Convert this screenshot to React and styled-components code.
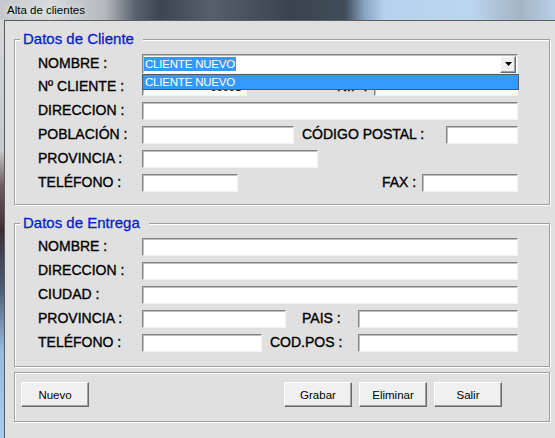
import styled, { createGlobalStyle } from 'styled-components';

const GlobalStyle = createGlobalStyle`
  html, body {
    margin: 0;
    padding: 0;
    background: #e0e0e0;
  }
  body {
    font-family: "Liberation Sans", Arial, sans-serif;
  }
`;

const Window = styled.div`
  width: 555px;
  height: 438px;
  display: flex;
  flex-direction: column;
  overflow: hidden;
  background: linear-gradient(
    180deg,
    #d6d8da 0px,
    #c6cacd 150px,
    #6e5e62 185px,
    #3c2e34 230px,
    #4e5e78 290px,
    #96bae0 350px,
    #a8ccee 438px
  );
`;

const TitleBar = styled.div`
  height: 20px;
  flex: none;
  display: flex;
  align-items: center;
  padding-left: 7px;
  background: linear-gradient(
    90deg,
    #c4c8cc 0px,
    #d8dadc 50px,
    #b4b8bc 105px,
    #5a646e 135px,
    #3c4650 160px,
    #56606a 210px,
    #3a444e 290px,
    #404c58 345px,
    #8aa6c4 365px,
    #b6d2ee 385px,
    #bcd6f0 470px,
    #a4b4c4 520px,
    #b8d0e8 555px
  );
`;

const Title = styled.span`
  font-size: 11.5px;
  color: #000;
  text-shadow: 0 0 6px rgba(255, 255, 255, 0.9);
`;

const Body = styled.div`
  flex: 1;
  margin-left: 4px;
  border-left: 1px solid #5c5c5c;
  border-top: 1px solid #5c5c5c;
  background: #e0e0e0;
  display: flex;
  flex-direction: column;
  padding: 0 5px 0 9px;
`;

const Group = styled.fieldset`
  margin: ${p => p.$top}px 0 0;
  padding: 0;
  min-width: 0;
  border: 1px solid #a0a0a0;
  box-shadow: inset 1px 1px 0 #fff, 1px 1px 0 #fff;
`;

const Legend = styled.legend`
  margin-left: 5px;
  padding: 0 9px 0 3px;
  font-size: 15px;
  line-height: 16px;
  color: #0a1ec8;
  -webkit-text-stroke: 0.3px #0a1ec8;
  background: #e0e0e0;
`;

const Fields = styled.div`
  display: flex;
  flex-direction: column;
  padding: 7px 31px ${p => p.$bottom}px 23px;
`;

const Row = styled.div`
  position: relative;
  display: flex;
  align-items: flex-start;
  height: 24px;
`;

const Label = styled.span`
  flex: none;
  width: 104px;
  font-size: 14px;
  line-height: ${p => p.$lh || 17}px;
  color: #000;
  -webkit-text-stroke: 0.35px #000;
  white-space: nowrap;
`;

const SideLabel = styled.span`
  flex: none;
  margin-left: ${p => p.$ml}px;
  font-size: 14px;
  line-height: 17px;
  color: #000;
  -webkit-text-stroke: 0.35px #000;
  white-space: nowrap;
`;

const Field = styled.input`
  box-sizing: border-box;
  flex: none;
  width: ${p => p.$w}px;
  height: 18px;
  margin: 0 0 0 ${p => (p.$right ? 'auto' : '0')};
  padding: 0 5px;
  border: 1px solid;
  border-color: #828282 #f4f4f4 #f4f4f4 #828282;
  box-shadow: inset 1px 1px 0 #c0c0c0;
  background: #fff;
  font: 11px "Liberation Sans", Arial, sans-serif;
  color: #000;
  text-align: ${p => (p.$alignRight ? 'right' : 'left')};
  outline: none;
`;

const Combo = styled.div`
  box-sizing: border-box;
  position: relative;
  z-index: 2;
  flex: none;
  width: 376px;
  height: 20px;
  display: flex;
  align-items: center;
  border: 1px solid;
  border-color: #828282 #f4f4f4 #f4f4f4 #828282;
  box-shadow: inset 1px 1px 0 #c0c0c0;
  background: #fff;
`;

const Selected = styled.span`
  margin-left: 1px;
  padding: 0 1px;
  font-size: 11.5px;
  letter-spacing: -0.2px;
  line-height: 14px;
  color: #fff;
  background: #3399ff;
`;

const DropButton = styled.div`
  box-sizing: border-box;
  margin-left: auto;
  margin-right: 1px;
  width: 16px;
  height: 17px;
  display: flex;
  align-items: center;
  justify-content: center;
  background: #f0f0f0;
  border: 1px solid;
  border-color: #fff #696969 #696969 #fff;
  box-shadow: inset -1px -1px 0 #a0a0a0;
`;

const DropList = styled.div`
  box-sizing: border-box;
  position: absolute;
  top: 19px;
  left: -1px;
  width: 377px;
  height: 16px;
  border: 1px solid #5a5a5a;
  background: #3399ff;
  color: #fff;
  font-size: 11.5px;
  letter-spacing: -0.2px;
  line-height: 14px;
  padding-left: 2px;
`;

const ButtonBar = styled.div`
  display: flex;
  gap: 7px;
  padding: 9px 47px 14px 6px;
`;

const Spacer = styled.div`
  flex: 1;
`;

const Button = styled.button`
  box-sizing: border-box;
  flex: none;
  width: 68px;
  height: 25px;
  padding: 0;
  background: #f0f0f0;
  border: 1px solid;
  border-color: #fff #696969 #696969 #fff;
  box-shadow: inset -1px -1px 0 #a0a0a0;
  font: 11.5px "Liberation Sans", Arial, sans-serif;
  color: #000;
`;

const App = () => {
  return (
    <>
      <GlobalStyle />
      <Window>
        <TitleBar>
          <Title>Alta de clientes</Title>
        </TitleBar>
        <Body>
          <Group $top={10}>
            <Legend>Datos de Cliente</Legend>
            <Fields $bottom={6}>
              <Row>
                <Label $lh={19}>NOMBRE :</Label>
                <Combo>
                  <Selected>CLIENTE NUEVO</Selected>
                  <DropButton>
                    <svg width="7" height="4" viewBox="0 0 7 4">
                      <path d="M0 0h7L3.5 4z" fill="#000" />
                    </svg>
                  </DropButton>
                  <DropList>CLIENTE NUEVO</DropList>
                </Combo>
              </Row>
              <Row>
                <Label>Nº CLIENTE :</Label>
                <Field $w={105} $alignRight defaultValue="00001" />
                <SideLabel $ml={90}>NIF :</SideLabel>
                <Field $w={144} $right />
              </Row>
              <Row>
                <Label>DIRECCION :</Label>
                <Field $w={376} />
              </Row>
              <Row>
                <Label>POBLACIÓN :</Label>
                <Field $w={152} />
                <SideLabel $ml={8}>CÓDIGO POSTAL :</SideLabel>
                <Field $w={72} $right />
              </Row>
              <Row>
                <Label>PROVINCIA :</Label>
                <Field $w={176} />
              </Row>
              <Row>
                <Label>TELÉFONO :</Label>
                <Field $w={96} />
                <SideLabel $ml={144}>FAX :</SideLabel>
                <Field $w={96} $right />
              </Row>
            </Fields>
          </Group>

          <Group $top={10}>
            <Legend>Datos de Entrega</Legend>
            <Fields $bottom={8}>
              <Row>
                <Label>NOMBRE :</Label>
                <Field $w={376} />
              </Row>
              <Row>
                <Label>DIRECCION :</Label>
                <Field $w={376} />
              </Row>
              <Row>
                <Label>CIUDAD :</Label>
                <Field $w={376} />
              </Row>
              <Row>
                <Label>PROVINCIA :</Label>
                <Field $w={144} />
                <SideLabel $ml={16}>PAIS :</SideLabel>
                <Field $w={160} $right />
              </Row>
              <Row>
                <Label>TELÉFONO :</Label>
                <Field $w={120} />
                <SideLabel $ml={8}>COD.POS :</SideLabel>
                <Field $w={160} $right />
              </Row>
            </Fields>
          </Group>

          <Group $top={5}>
            <ButtonBar>
              <Button>Nuevo</Button>
              <Spacer />
              <Button>Grabar</Button>
              <Button>Eliminar</Button>
              <Button>Salir</Button>
            </ButtonBar>
          </Group>
        </Body>
      </Window>
    </>
  );
};

export default App;
